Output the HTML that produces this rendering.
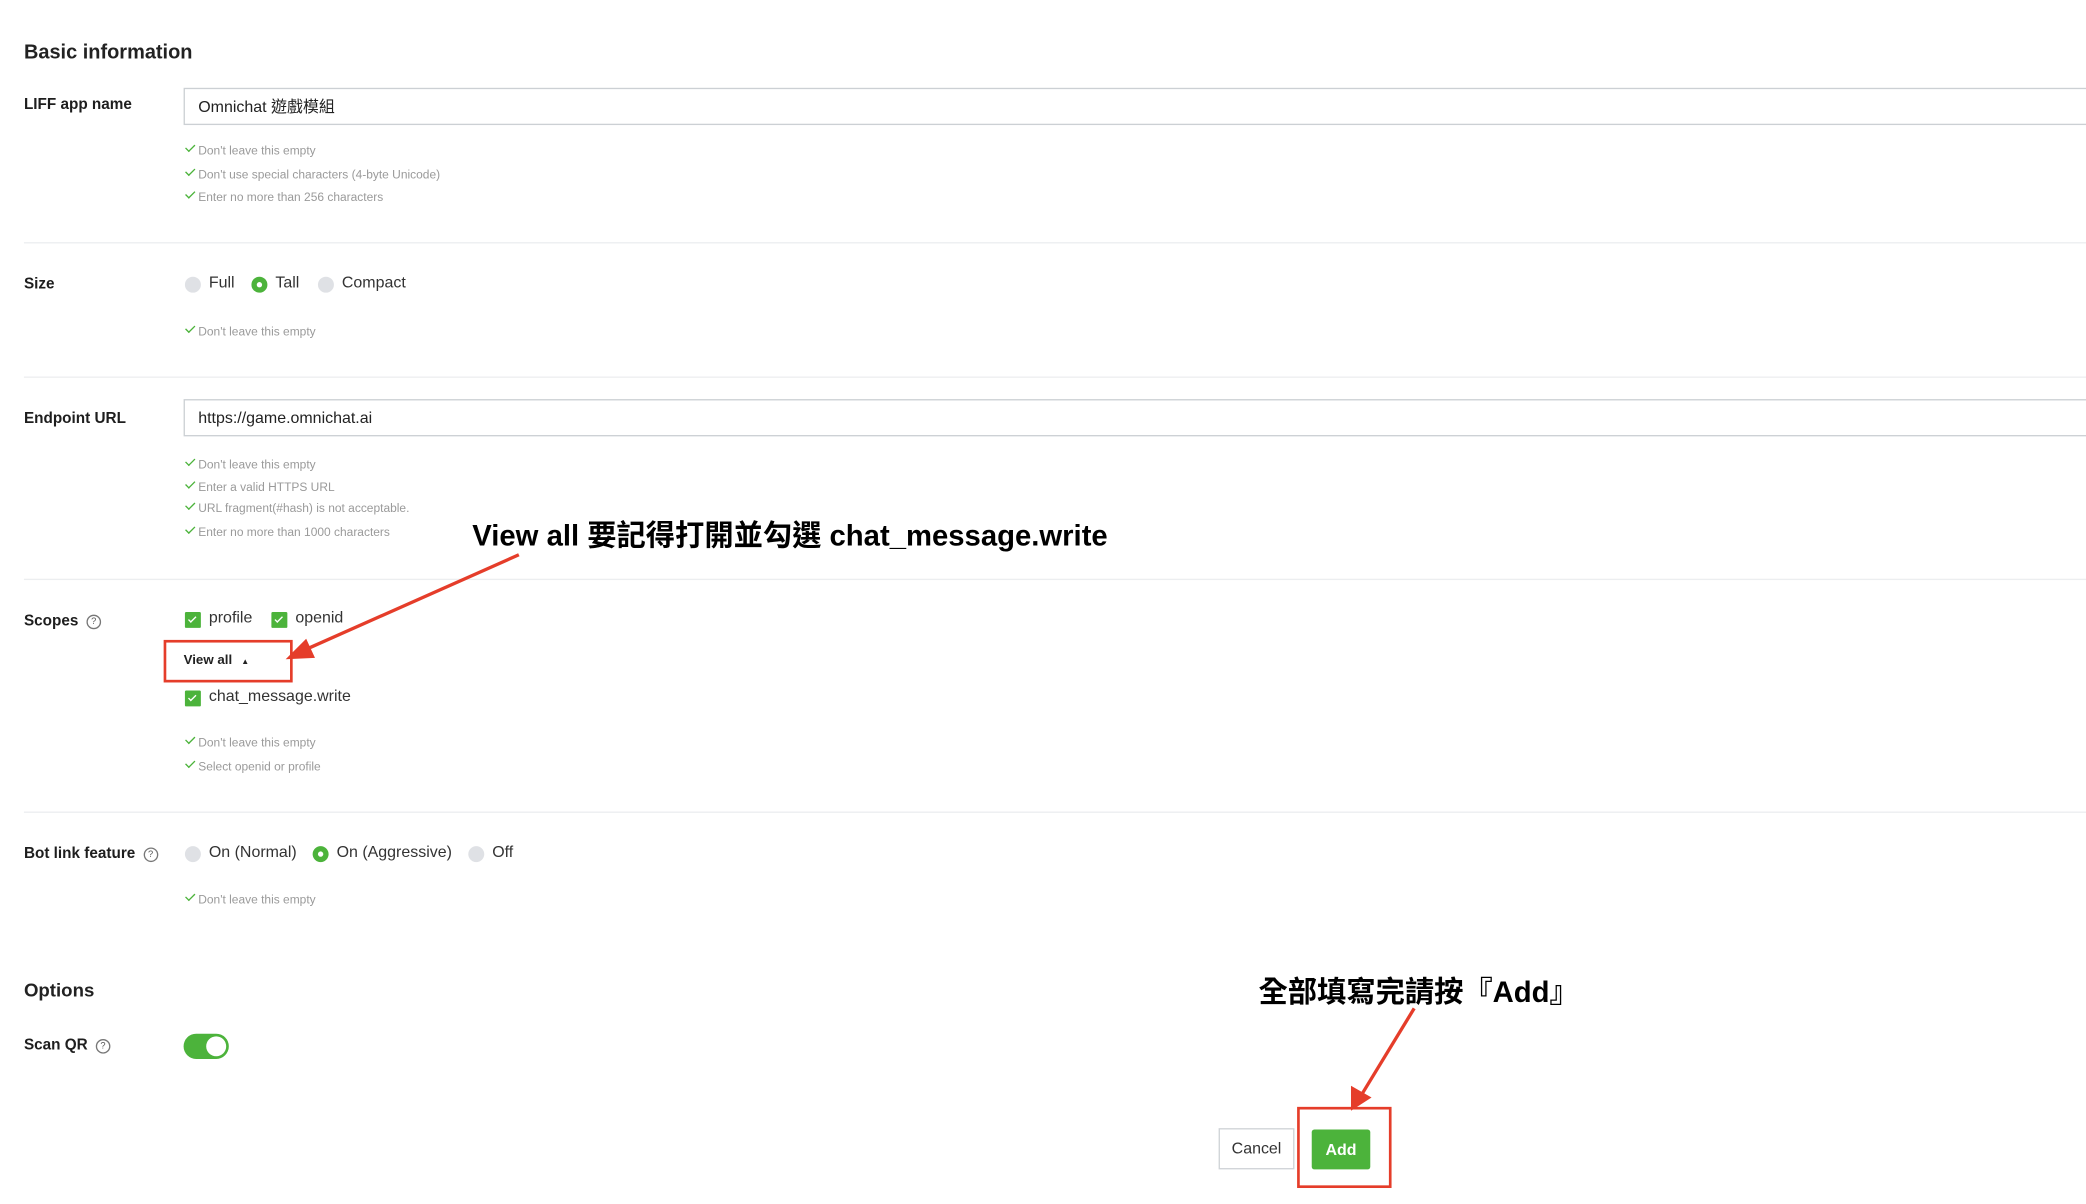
<!DOCTYPE html>
<html><head><meta charset="utf-8"><style>
html,body{margin:0;padding:0;background:#fff;width:2086px;height:1204px;overflow:hidden}
#w{position:absolute;left:0;top:0;width:1568px;height:905px;transform:scale(1.33036);transform-origin:0 0;font-family:"Liberation Sans","Noto Sans CJK TC",sans-serif;color:#222}
.a{position:absolute;white-space:nowrap}
.lb{font-weight:bold;font-size:11.5px;color:#1e1e1e}
.h{font-size:9px;color:#9a9a9a}
.h:before{content:"";display:inline-block;width:3px;height:6px;border:solid #4cb33b;border-width:0 1.2px 1.2px 0;transform:rotate(45deg);margin:0 4px 0 5px;vertical-align:2px}
.inp{position:absolute;left:138px;width:1440px;height:28px;border:1px solid #ccd0d4;box-sizing:border-box;font-size:12px;line-height:26px;padding-left:10px}
.dv{position:absolute;left:18px;width:1560px;height:1px;background:#eceef0}
.rd{position:absolute;width:12px;height:12px;border-radius:50%;background:#dfe1e5}
.rd.on{background:#4cb33b}.rd.on:after{content:"";position:absolute;left:4px;top:4px;width:4px;height:4px;border-radius:50%;background:#fff}
.t{font-size:12px;color:#333}
.cb{position:absolute;width:12px;height:12px;background:#4cb33b;border-radius:1px}
.cb:after{content:"";position:absolute;left:4px;top:2px;width:2px;height:5px;border:solid #fff;border-width:0 1.3px 1.3px 0;transform:rotate(45deg)}
.q{display:inline-block;width:9px;height:9px;border:1px solid #777;border-radius:50%;font-size:7px;line-height:9px;text-align:center;color:#555;font-weight:normal;margin-left:6px;vertical-align:1px}
.ann{font-weight:bold;font-size:22px;color:#000}
</style></head><body><div id="w">
<div class="a" style="left:18px;top:31px;font-size:15px;font-weight:bold">Basic information</div>
<div class="a lb" style="left:18px;top:73px">LIFF app name</div>
<div class="inp" style="top:66px">Omnichat 遊戲模組</div>
<div class="a h" style="left:136px;top:107px">Don't leave this empty</div>
<div class="a h" style="left:136px;top:125px">Don't use special characters (4-byte Unicode)</div>
<div class="a h" style="left:136px;top:142px">Enter no more than 256 characters</div>
<div class="dv" style="top:182px"></div>
<div class="a lb" style="left:18px;top:208px">Size</div>
<div class="rd" style="left:139px;top:208px"></div><div class="a t" style="left:157px;top:205px">Full</div>
<div class="rd on" style="left:189px;top:208px"></div><div class="a t" style="left:207px;top:205px">Tall</div>
<div class="rd" style="left:239px;top:208px"></div><div class="a t" style="left:257px;top:205px">Compact</div>
<div class="a h" style="left:136px;top:243px">Don't leave this empty</div>
<div class="dv" style="top:283px"></div>
<div class="a lb" style="left:18px;top:309px">Endpoint URL</div>
<div class="inp" style="top:300px">https://game.omnichat.ai</div>
<div class="a h" style="left:136px;top:343px">Don't leave this empty</div>
<div class="a h" style="left:136px;top:360px">Enter a valid HTTPS URL</div>
<div class="a h" style="left:136px;top:376px">URL fragment(#hash) is not acceptable.</div>
<div class="a h" style="left:136px;top:394px">Enter no more than 1000 characters</div>
<div class="dv" style="top:435px"></div>
<div class="a lb" style="left:18px;top:461px">Scopes<span class="q">?</span></div>
<div class="cb" style="left:139px;top:460px"></div><div class="a t" style="left:157px;top:457px">profile</div>
<div class="cb" style="left:204px;top:460px"></div><div class="a t" style="left:222px;top:457px">openid</div>
<div class="a" style="left:138px;top:491px;font-size:10px;font-weight:bold;color:#222">View all <span style="font-size:6px;margin-left:4px">▲</span></div>
<div class="a" style="left:123px;top:481px;width:93px;height:28px;border:2px solid #e53d2a"></div>
<div class="cb" style="left:139px;top:519px"></div><div class="a t" style="left:157px;top:516px">chat_message.write</div>
<div class="a h" style="left:136px;top:552px">Don't leave this empty</div>
<div class="a h" style="left:136px;top:570px">Select openid or profile</div>
<div class="dv" style="top:610px"></div>
<div class="a lb" style="left:18px;top:636px">Bot link feature<span class="q">?</span></div>
<div class="rd" style="left:139px;top:636px"></div><div class="a t" style="left:157px;top:633px">On (Normal)</div>
<div class="rd on" style="left:235px;top:636px"></div><div class="a t" style="left:253px;top:633px">On (Aggressive)</div>
<div class="rd" style="left:352px;top:636px"></div><div class="a t" style="left:370px;top:633px">Off</div>
<div class="a h" style="left:136px;top:670px">Don't leave this empty</div>
<div class="a" style="left:18px;top:736px;font-size:14px;font-weight:bold">Options</div>
<div class="a lb" style="left:18px;top:780px">Scan QR<span class="q">?</span></div>
<div class="a" style="left:138px;top:777px;width:34px;height:19px;border-radius:10px;background:#4cb33b"><div style="position:absolute;right:2px;top:2px;width:15px;height:15px;border-radius:50%;background:#fff"></div></div>
<div class="a" style="left:916px;top:848px;width:57px;height:31px;border:1px solid #cfd3d7;box-sizing:border-box;font-size:12px;line-height:29px;text-align:center;color:#333">Cancel</div>
<div class="a" style="left:986px;top:849px;width:44px;height:30px;background:#4cb33b;border-radius:2px;font-size:12px;line-height:30px;text-align:center;color:#fff;font-weight:600">Add</div>
<div class="a" style="left:975px;top:832px;width:67px;height:57px;border:2px solid #e53d2a"></div>
<div class="a ann" style="left:355px;top:385px">View all 要記得打開並勾選 chat_message.write</div>
<div class="a ann" style="left:946px;top:728px">全部填寫完請按『Add』</div>
<svg class="a" style="left:0;top:0" width="1568" height="905"><g stroke="#e53d2a" stroke-width="2.5" fill="#e53d2a">
<line x1="390" y1="417" x2="228" y2="489"/><polygon points="216,495 230,481 236,494" stroke-width="1"/>
<line x1="1063" y1="758" x2="1024" y2="822"/><polygon points="1016,834 1016,817 1030,825" stroke-width="1"/></g></svg>
</div></body></html>
